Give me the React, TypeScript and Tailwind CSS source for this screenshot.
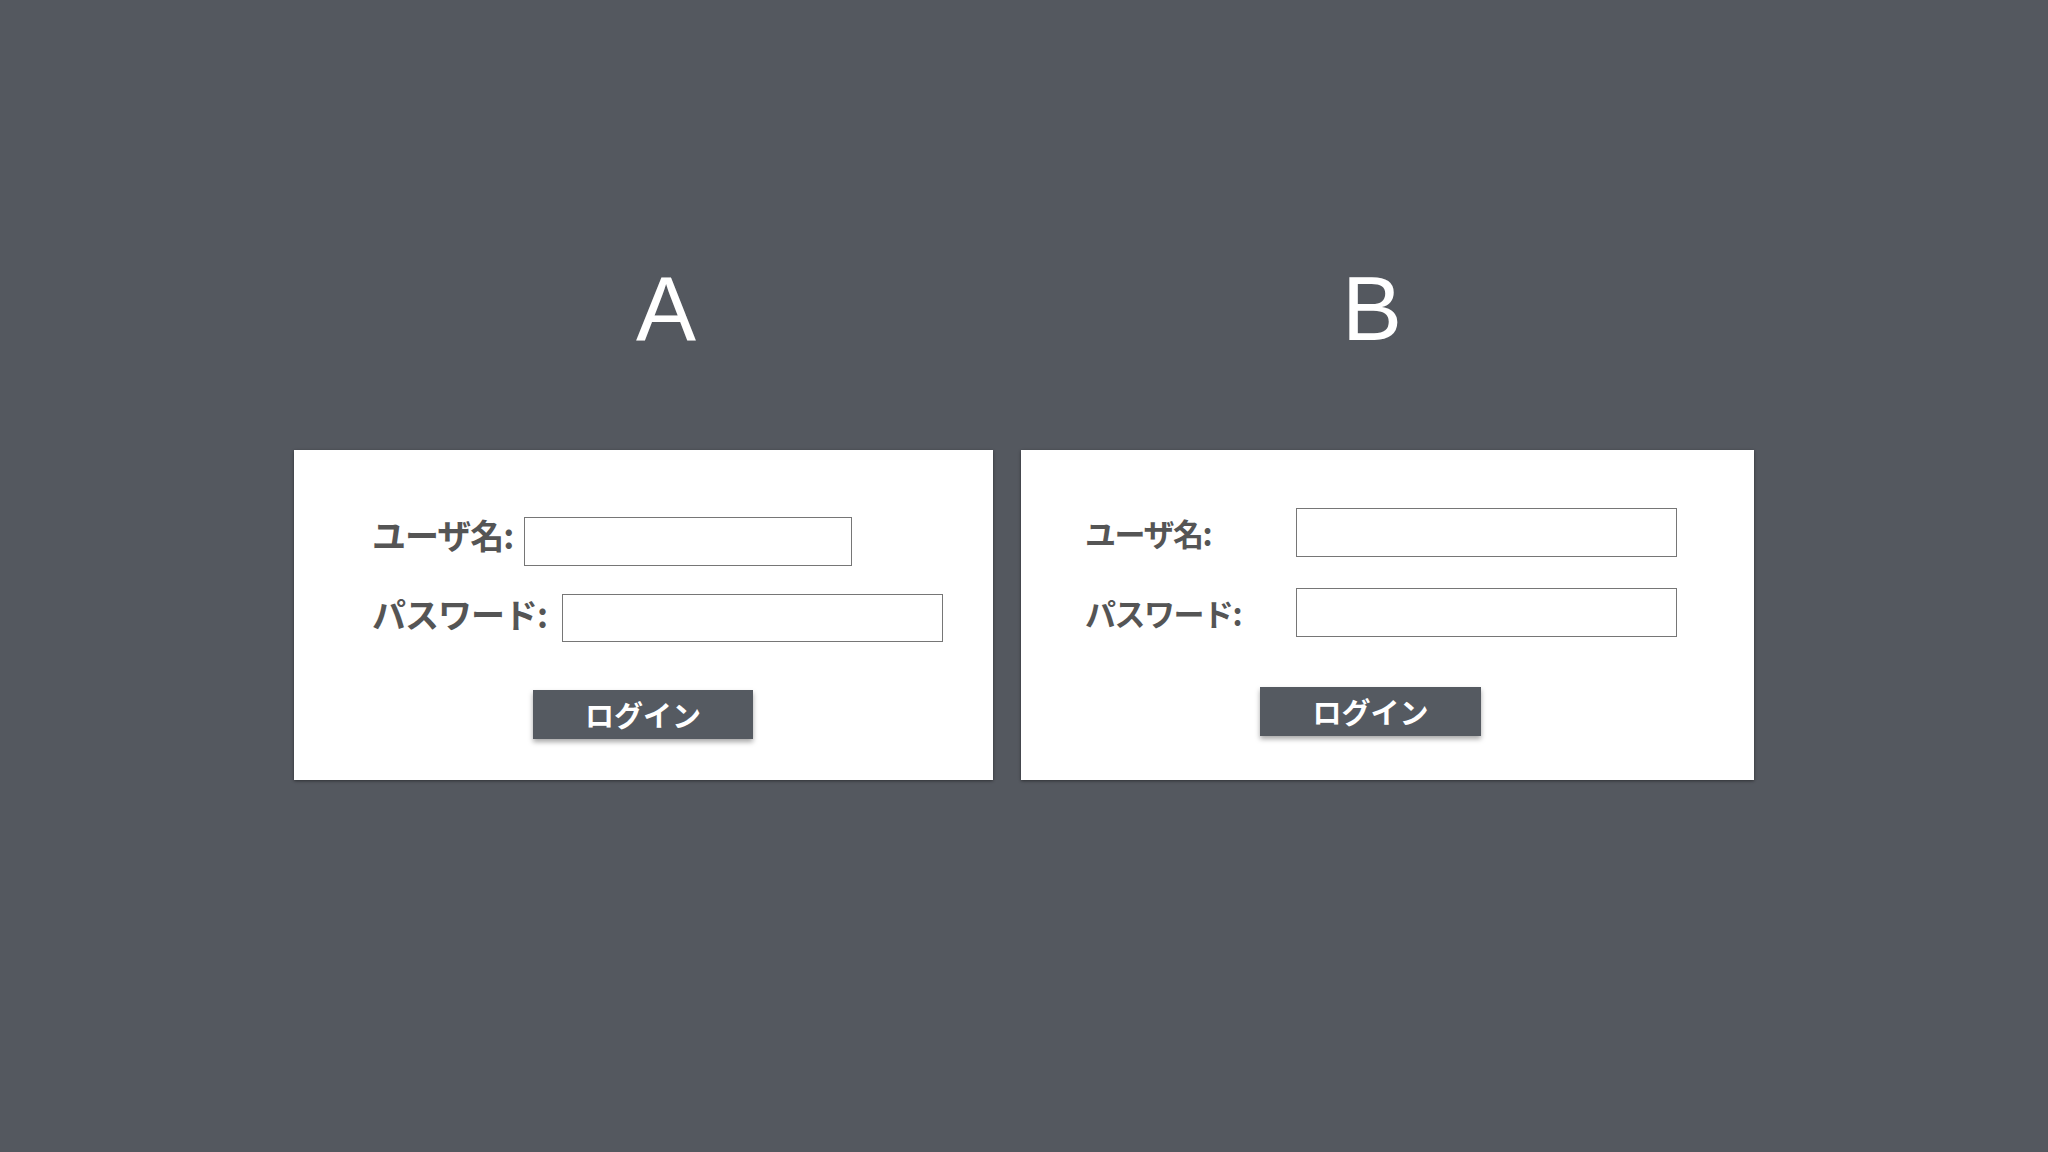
import React from "react";

const jp = { fontFamily: '"Noto Sans CJK JP", "Noto Sans", sans-serif' };
const latin = { fontFamily: '"Liberation Sans", Arial, sans-serif' };

function LoginButton({ className = "" }: { className?: string }) {
  return (
    <button
      type="button"
      style={jp}
      className={`h-[49px] w-[220px] bg-[#555a61] text-white text-[29px] font-bold leading-none shadow-[0_3px_5px_rgba(0,0,0,0.35)] ${className}`}
    >
      ログイン
    </button>
  );
}

function CardA() {
  return (
    <div className="h-[330px] w-[699px] bg-white shadow-[0_1px_3px_rgba(0,0,0,0.45)] pt-[67px] pl-[78px] flex flex-col">
      <div className="flex items-center h-[49px]">
        <label style={jp} className="w-[152px] mb-[14px] text-[34px] font-bold text-[#555555] leading-none whitespace-nowrap tracking-[-1px]">
          ユーザ名:
        </label>
        <input type="text" className="h-[49px] w-[328px] border border-[#767676] bg-white outline-none" />
      </div>
      <div className="flex items-center h-[48px] mt-[28px]">
        <label style={jp} className="w-[190px] mb-[8px] text-[34px] font-bold text-[#555555] leading-none whitespace-nowrap tracking-[-1px]">
          パスワード:
        </label>
        <input type="password" className="h-[48px] w-[381px] border border-[#767676] bg-white outline-none" />
      </div>
      <LoginButton className="mt-[48px] ml-[161px]" />
    </div>
  );
}

function CardB() {
  return (
    <div className="h-[330px] w-[733px] bg-white shadow-[0_1px_3px_rgba(0,0,0,0.45)] pt-[58px] pl-[64px] flex flex-col">
      <div className="flex items-center h-[49px]">
        <label style={jp} className="w-[211px] text-[31px] font-bold text-[#555555] leading-none whitespace-nowrap tracking-[-1.5px]">
          ユーザ名:
        </label>
        <input type="text" className="h-[49px] w-[381px] border border-[#767676] bg-white outline-none" />
      </div>
      <div className="flex items-center h-[49px] mt-[31px]">
        <label style={jp} className="w-[211px] text-[31px] font-bold text-[#555555] leading-none whitespace-nowrap tracking-[-1.5px]">
          パスワード:
        </label>
        <input type="password" className="h-[49px] w-[381px] border border-[#767676] bg-white outline-none" />
      </div>
      <LoginButton className="mt-[50px] ml-[175px] w-[221px]" />
    </div>
  );
}

export default function App() {
  return (
    <div className="h-[1152px] w-full bg-[#54585f] flex justify-center gap-[28px] pt-[264px]">
      <div className="flex flex-col w-[699px]">
        <h1 style={latin} className="h-[90px] text-[90px] leading-none text-white text-center pl-[45px]">
          A
        </h1>
        <div className="mt-[96px]">
          <CardA />
        </div>
      </div>
      <div className="flex flex-col w-[733px]">
        <h1 style={latin} className="h-[90px] text-[90px] leading-none text-white text-center pr-[31px]">
          B
        </h1>
        <div className="mt-[96px]">
          <CardB />
        </div>
      </div>
    </div>
  );
}
